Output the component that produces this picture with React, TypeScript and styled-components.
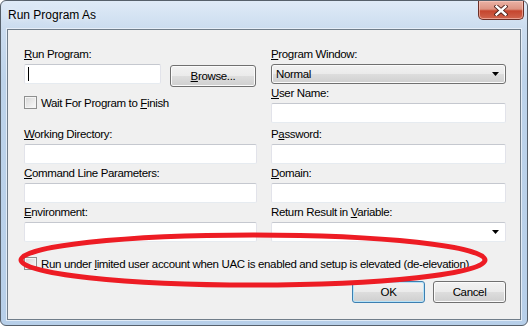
import styled, { createGlobalStyle } from "styled-components";

const GlobalStyle = createGlobalStyle`
  * {
    box-sizing: border-box;
  }
  body {
    margin: 0;
    background: #ffffff;
    font-family: "Liberation Sans", "Noto Sans", sans-serif;
    font-size: 11.5px;
    letter-spacing: -0.35px;
    color: #000;
  }
`;

const Window = styled.div`
  position: relative;
  width: 528px;
  height: 326px;
  border: 1px solid #56606b;
  border-radius: 6px;
  padding: 0 6px 5px 6px;
  background: linear-gradient(
    180deg,
    #dfeaf7 0px,
    #cbdcef 28px,
    #bdd3ea 80px,
    #b7cfe9 100%
  );
  display: flex;
  flex-direction: column;
`;

const TitleBar = styled.div`
  height: 28px;
  display: flex;
  align-items: center;
  justify-content: space-between;
  padding-left: 1px;
  margin-right: -3px;
`;

const Title = styled.span`
  font-size: 12px;
  letter-spacing: 0;
  line-height: 15px;
  color: #000;
  text-shadow: 0 0 6px rgba(255, 255, 255, 0.9);
`;

const CloseButton = styled.div`
  align-self: flex-start;
  width: 46px;
  height: 19px;
  border: 1px solid #6b2f27;
  border-top: none;
  border-radius: 0 0 5px 5px;
  background: linear-gradient(
    180deg,
    #eab2a5 0%,
    #dd9382 45%,
    #c5452e 55%,
    #d0654e 100%
  );
  box-shadow: inset 0 0 0 1px rgba(255, 210, 200, 0.55);
  display: flex;
  align-items: center;
  justify-content: center;
`;

const Client = styled.div`
  flex: 1;
  background: #f0f0f0;
  border: 1px solid #707d8a;
  box-shadow: 0 0 0 1px rgba(236, 243, 250, 0.8);
  padding: 17px 14px 0 16px;
  display: flex;
  flex-direction: column;
`;

const Columns = styled.div`
  display: grid;
  grid-template-columns: 233px 235px;
  column-gap: 14px;
`;

const Column = styled.div`
  display: flex;
  flex-direction: column;
`;

const Label = styled.div<{ $top?: number }>`
  height: 15px;
  line-height: 15px;
  margin-top: ${(p) => p.$top ?? 0}px;
  white-space: nowrap;
`;

const Key = styled.span`
  text-decoration: underline;
  text-underline-offset: 1px;
`;

const TextBox = styled.div<{ $width?: number; $top?: number }>`
  position: relative;
  width: ${(p) => (p.$width ? `${p.$width}px` : "100%")};
  height: 20px;
  margin-top: ${(p) => p.$top ?? 2}px;
  background: #fff;
  border: 1px solid #e2e3ea;
  border-top-color: #c5c8cf;
  border-bottom-color: #e6ebf0;
  border-radius: 2px;
  display: flex;
  align-items: center;
  justify-content: space-between;
  padding: 0 6px 0 3px;
`;

const Caret = styled.span`
  width: 1px;
  height: 14px;
  background: #000;
`;

const InputRow = styled.div`
  display: flex;
  align-items: flex-start;
  margin-top: 2px;
`;

const Button = styled.div<{ $width: number; $default?: boolean }>`
  width: ${(p) => p.$width}px;
  height: 22px;
  border: 1px solid ${(p) => (p.$default ? "#3c7fb1" : "#707070")};
  border-radius: 3px;
  background: linear-gradient(
    180deg,
    #f2f2f2 0%,
    #ebebeb 48%,
    #dddddd 52%,
    #cfcfcf 100%
  );
  box-shadow: inset 0 0 0 1px
    ${(p) => (p.$default ? "#b7e3f8" : "#fbfbfb")};
  display: flex;
  align-items: center;
  justify-content: center;
  line-height: 15px;
`;

const BrowseButton = styled(Button)`
  margin: 1px 0 0 9px;
`;

const CheckRow = styled.div<{ $top: number }>`
  height: 15px;
  margin-top: ${(p) => p.$top}px;
  display: flex;
  align-items: center;
  gap: 4px;
  white-space: nowrap;
`;

const CheckBox = styled.span`
  width: 13px;
  height: 13px;
  flex: none;
  border: 1px solid #8e8f8f;
  background: linear-gradient(135deg, #d6d6d6 0%, #ececec 60%, #fbfbfb 100%);
  box-shadow: inset 0 0 0 1px #f4f4f4;
`;

const Select = styled.div`
  height: 20px;
  margin-top: 2px;
  border: 1px solid #707070;
  border-radius: 3px;
  background: linear-gradient(
    180deg,
    #f2f2f2 0%,
    #ebebeb 48%,
    #dddddd 52%,
    #cfcfcf 100%
  );
  box-shadow: inset 0 0 0 1px #fbfbfb;
  display: flex;
  align-items: center;
  justify-content: space-between;
  padding: 0 6px 0 4px;
  line-height: 15px;
`;

const ButtonRow = styled.div`
  display: flex;
  justify-content: flex-end;
  gap: 8px;
  margin-top: 10px;
`;

const Annotation = styled.svg`
  position: absolute;
  left: -1px;
  top: -1px;
  pointer-events: none;
`;

function Arrow() {
  return (
    <svg width="7" height="4" viewBox="0 0 7 4">
      <polygon points="0,0 7,0 3.5,4" fill="#000" />
    </svg>
  );
}

function CloseGlyph() {
  return (
    <svg width="14" height="11" viewBox="0 0 14 11">
      <path
        d="M2.5 1.5 L11.5 9.5 M11.5 1.5 L2.5 9.5"
        stroke="#4a1e18"
        strokeWidth="4.2"
        strokeLinecap="square"
      />
      <path
        d="M2.5 1.5 L11.5 9.5 M11.5 1.5 L2.5 9.5"
        stroke="#ffffff"
        strokeWidth="2.4"
        strokeLinecap="square"
      />
    </svg>
  );
}

export default function App() {
  return (
    <>
      <GlobalStyle />
      <Window>
        <TitleBar>
          <Title>Run Program As</Title>
          <CloseButton>
            <CloseGlyph />
          </CloseButton>
        </TitleBar>
        <Client>
          <Columns>
            <Column>
              <Label>
                <Key>R</Key>un Program:
              </Label>
              <InputRow>
                <TextBox $width={137} $top={0}>
                  <Caret />
                </TextBox>
                <BrowseButton $width={86}>
                  <span>
                    <Key>B</Key>rowse...
                  </span>
                </BrowseButton>
              </InputRow>
              <CheckRow $top={8}>
                <CheckBox />
                <span>
                  Wait For Program to <Key>F</Key>inish
                </span>
              </CheckRow>
              <Label $top={17}>
                <Key>W</Key>orking Directory:
              </Label>
              <TextBox />
              <Label $top={2}>
                <Key>C</Key>ommand Line Parameters:
              </Label>
              <TextBox />
              <Label $top={2}>
                <Key>E</Key>nvironment:
              </Label>
              <TextBox />
            </Column>
            <Column>
              <Label>
                <Key>P</Key>rogram Window:
              </Label>
              <Select>
                <span>Normal</span>
                <Arrow />
              </Select>
              <Label $top={2}>
                <Key>U</Key>ser Name:
              </Label>
              <TextBox />
              <Label $top={4}>
                P<Key>a</Key>ssword:
              </Label>
              <TextBox />
              <Label $top={2}>
                <Key>D</Key>omain:
              </Label>
              <TextBox />
              <Label $top={2}>
                Return Result in <Key>V</Key>ariable:
              </Label>
              <TextBox>
                <span />
                <Arrow />
              </TextBox>
            </Column>
          </Columns>
          <CheckRow $top={14}>
            <CheckBox />
            <span>
              Run under <Key>l</Key>imited user account when UAC is enabled and
              setup is elevated (de-elevation)
            </span>
          </CheckRow>
          <ButtonRow>
            <Button $width={73} $default>
              OK
            </Button>
            <Button $width={73}>Cancel</Button>
          </ButtonRow>
        </Client>
        <Annotation width="530" height="327" viewBox="0 0 530 327">
          <ellipse
            cx="253"
            cy="260"
            rx="232"
            ry="25"
            fill="none"
            stroke="#ed1c24"
            strokeWidth="5"
          />
        </Annotation>
      </Window>
    </>
  );
}
